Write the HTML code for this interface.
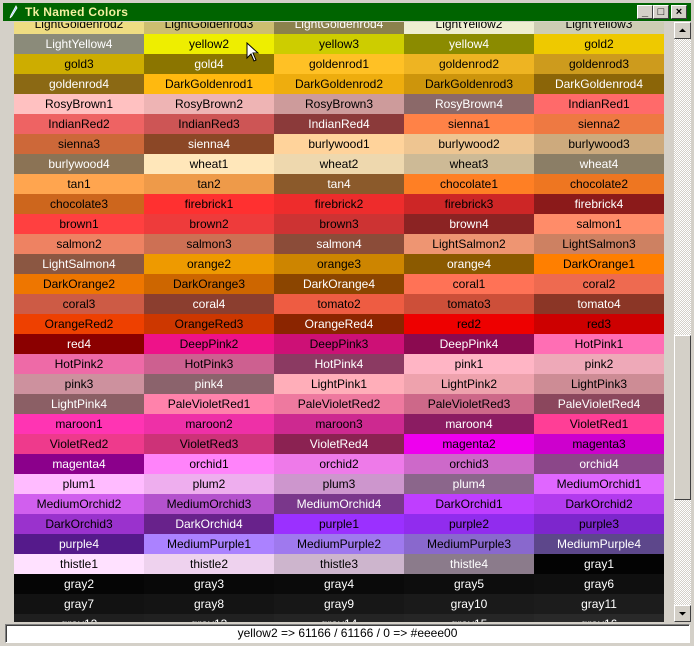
<!DOCTYPE html>
<html><head><meta charset="utf-8"><style>
*{margin:0;padding:0;box-sizing:border-box}
body{width:694px;height:646px;background:#d4d0c8;position:relative;overflow:hidden;font-family:"Liberation Sans",sans-serif}
#tb{position:absolute;left:3px;top:3px;width:688px;height:18px;background:#006400}
#tb .t{position:absolute;left:22px;top:2px;font-weight:bold;font-size:12px;color:#f4f0a0;letter-spacing:0.3px}
.btn{position:absolute;top:2px;width:16px;height:14px;background:#d4d0c8;border:1px solid;border-color:#fff #404040 #404040 #fff;font-size:11px;line-height:12px;text-align:center;color:#000;font-weight:bold}
#grid{position:absolute;left:14px;top:22px;width:650px;height:600px;overflow:hidden}
#in{position:absolute;left:0;top:-8px}
.r{display:flex;height:20px}
.r div{width:130px;height:20px;line-height:20px;text-align:center;font-size:12px;color:#000;white-space:nowrap}
.w{color:#fff!important}
#sb{position:absolute;left:674px;top:22px;width:17px;height:600px;background-color:#eee;background-image:repeating-conic-gradient(#d4d0c8 0 25%,#fff 0 50%);background-size:2px 2px}
.ab{position:absolute;left:0;width:17px;height:17px;background:#d4d0c8;border:1px solid;border-color:#fff #404040 #404040 #fff}
#thumb{position:absolute;left:0;top:313px;width:17px;height:165px;background:#d4d0c8;border:1px solid;border-color:#fff #404040 #404040 #fff}
#st{position:absolute;left:5px;top:624px;width:685px;height:19px;background:#fff;border:1px solid;border-color:#808080 #fff #fff #808080;box-shadow:inset 1px 1px 0 #404040;font-size:12px;line-height:17px;text-align:center;color:#000}
</style></head><body>
<div id="tb"><svg style="position:absolute;left:5px;top:2px" width="10" height="14"><path d="M8 1 L3 10 L2 13 L4 11 L9 3 Z" fill="#9cf" stroke="#fff" stroke-width="0.8"/></svg><span class="t">Tk Named Colors</span>
<div class="btn" style="left:634px">_</div><div class="btn" style="left:650px">□</div><div class="btn" style="left:668px">×</div></div>
<div id="grid"><div id="in">
<div class="r"><div style="background:rgb(238,220,130)">LightGoldenrod2</div><div style="background:rgb(205,190,112)">LightGoldenrod3</div><div class="w" style="background:rgb(139,129,76)">LightGoldenrod4</div><div style="background:rgb(238,238,209)">LightYellow2</div><div style="background:rgb(205,205,180)">LightYellow3</div></div>
<div class="r"><div class="w" style="background:rgb(139,139,122)">LightYellow4</div><div style="background:rgb(238,238,0)">yellow2</div><div style="background:rgb(205,205,0)">yellow3</div><div class="w" style="background:rgb(139,139,0)">yellow4</div><div style="background:rgb(238,201,0)">gold2</div></div>
<div class="r"><div style="background:rgb(205,173,0)">gold3</div><div class="w" style="background:rgb(139,117,0)">gold4</div><div style="background:rgb(255,193,37)">goldenrod1</div><div style="background:rgb(238,180,34)">goldenrod2</div><div style="background:rgb(205,155,29)">goldenrod3</div></div>
<div class="r"><div class="w" style="background:rgb(139,105,20)">goldenrod4</div><div style="background:rgb(255,185,15)">DarkGoldenrod1</div><div style="background:rgb(238,173,14)">DarkGoldenrod2</div><div style="background:rgb(205,149,12)">DarkGoldenrod3</div><div class="w" style="background:rgb(139,101,8)">DarkGoldenrod4</div></div>
<div class="r"><div style="background:rgb(255,193,193)">RosyBrown1</div><div style="background:rgb(238,180,180)">RosyBrown2</div><div style="background:rgb(205,155,155)">RosyBrown3</div><div class="w" style="background:rgb(139,105,105)">RosyBrown4</div><div style="background:rgb(255,106,106)">IndianRed1</div></div>
<div class="r"><div style="background:rgb(238,99,99)">IndianRed2</div><div style="background:rgb(205,85,85)">IndianRed3</div><div class="w" style="background:rgb(139,58,58)">IndianRed4</div><div style="background:rgb(255,130,71)">sienna1</div><div style="background:rgb(238,121,66)">sienna2</div></div>
<div class="r"><div style="background:rgb(205,104,57)">sienna3</div><div class="w" style="background:rgb(139,71,38)">sienna4</div><div style="background:rgb(255,211,155)">burlywood1</div><div style="background:rgb(238,197,145)">burlywood2</div><div style="background:rgb(205,170,125)">burlywood3</div></div>
<div class="r"><div class="w" style="background:rgb(139,115,85)">burlywood4</div><div style="background:rgb(255,231,186)">wheat1</div><div style="background:rgb(238,216,174)">wheat2</div><div style="background:rgb(205,186,150)">wheat3</div><div class="w" style="background:rgb(139,126,102)">wheat4</div></div>
<div class="r"><div style="background:rgb(255,165,79)">tan1</div><div style="background:rgb(238,154,73)">tan2</div><div class="w" style="background:rgb(139,90,43)">tan4</div><div style="background:rgb(255,127,36)">chocolate1</div><div style="background:rgb(238,118,33)">chocolate2</div></div>
<div class="r"><div style="background:rgb(205,102,29)">chocolate3</div><div style="background:rgb(255,48,48)">firebrick1</div><div style="background:rgb(238,44,44)">firebrick2</div><div style="background:rgb(205,38,38)">firebrick3</div><div class="w" style="background:rgb(139,26,26)">firebrick4</div></div>
<div class="r"><div style="background:rgb(255,64,64)">brown1</div><div style="background:rgb(238,59,59)">brown2</div><div style="background:rgb(205,51,51)">brown3</div><div class="w" style="background:rgb(139,35,35)">brown4</div><div style="background:rgb(255,140,105)">salmon1</div></div>
<div class="r"><div style="background:rgb(238,130,98)">salmon2</div><div style="background:rgb(205,112,84)">salmon3</div><div class="w" style="background:rgb(139,76,57)">salmon4</div><div style="background:rgb(238,149,114)">LightSalmon2</div><div style="background:rgb(205,129,98)">LightSalmon3</div></div>
<div class="r"><div class="w" style="background:rgb(139,87,66)">LightSalmon4</div><div style="background:rgb(238,154,0)">orange2</div><div style="background:rgb(205,133,0)">orange3</div><div class="w" style="background:rgb(139,90,0)">orange4</div><div style="background:rgb(255,127,0)">DarkOrange1</div></div>
<div class="r"><div style="background:rgb(238,118,0)">DarkOrange2</div><div style="background:rgb(205,102,0)">DarkOrange3</div><div class="w" style="background:rgb(139,69,0)">DarkOrange4</div><div style="background:rgb(255,114,86)">coral1</div><div style="background:rgb(238,106,80)">coral2</div></div>
<div class="r"><div style="background:rgb(205,91,69)">coral3</div><div class="w" style="background:rgb(139,62,47)">coral4</div><div style="background:rgb(238,92,66)">tomato2</div><div style="background:rgb(205,79,57)">tomato3</div><div class="w" style="background:rgb(139,54,38)">tomato4</div></div>
<div class="r"><div style="background:rgb(238,64,0)">OrangeRed2</div><div style="background:rgb(205,55,0)">OrangeRed3</div><div class="w" style="background:rgb(139,37,0)">OrangeRed4</div><div style="background:rgb(238,0,0)">red2</div><div style="background:rgb(205,0,0)">red3</div></div>
<div class="r"><div class="w" style="background:rgb(139,0,0)">red4</div><div style="background:rgb(238,18,137)">DeepPink2</div><div style="background:rgb(205,16,118)">DeepPink3</div><div class="w" style="background:rgb(139,10,80)">DeepPink4</div><div style="background:rgb(255,110,180)">HotPink1</div></div>
<div class="r"><div style="background:rgb(238,106,167)">HotPink2</div><div style="background:rgb(205,96,144)">HotPink3</div><div class="w" style="background:rgb(139,58,98)">HotPink4</div><div style="background:rgb(255,181,197)">pink1</div><div style="background:rgb(238,169,184)">pink2</div></div>
<div class="r"><div style="background:rgb(205,145,158)">pink3</div><div class="w" style="background:rgb(139,99,108)">pink4</div><div style="background:rgb(255,174,185)">LightPink1</div><div style="background:rgb(238,162,173)">LightPink2</div><div style="background:rgb(205,140,149)">LightPink3</div></div>
<div class="r"><div class="w" style="background:rgb(139,95,101)">LightPink4</div><div style="background:rgb(255,130,171)">PaleVioletRed1</div><div style="background:rgb(238,121,159)">PaleVioletRed2</div><div style="background:rgb(205,104,137)">PaleVioletRed3</div><div class="w" style="background:rgb(139,71,93)">PaleVioletRed4</div></div>
<div class="r"><div style="background:rgb(255,52,179)">maroon1</div><div style="background:rgb(238,48,167)">maroon2</div><div style="background:rgb(205,41,144)">maroon3</div><div class="w" style="background:rgb(139,28,98)">maroon4</div><div style="background:rgb(255,62,150)">VioletRed1</div></div>
<div class="r"><div style="background:rgb(238,58,140)">VioletRed2</div><div style="background:rgb(205,50,120)">VioletRed3</div><div class="w" style="background:rgb(139,34,82)">VioletRed4</div><div style="background:rgb(238,0,238)">magenta2</div><div style="background:rgb(205,0,205)">magenta3</div></div>
<div class="r"><div class="w" style="background:rgb(139,0,139)">magenta4</div><div style="background:rgb(255,131,250)">orchid1</div><div style="background:rgb(238,122,233)">orchid2</div><div style="background:rgb(205,105,201)">orchid3</div><div class="w" style="background:rgb(139,71,137)">orchid4</div></div>
<div class="r"><div style="background:rgb(255,187,255)">plum1</div><div style="background:rgb(238,174,238)">plum2</div><div style="background:rgb(205,150,205)">plum3</div><div class="w" style="background:rgb(139,102,139)">plum4</div><div style="background:rgb(224,102,255)">MediumOrchid1</div></div>
<div class="r"><div style="background:rgb(209,95,238)">MediumOrchid2</div><div style="background:rgb(180,82,205)">MediumOrchid3</div><div class="w" style="background:rgb(122,55,139)">MediumOrchid4</div><div style="background:rgb(191,62,255)">DarkOrchid1</div><div style="background:rgb(178,58,238)">DarkOrchid2</div></div>
<div class="r"><div style="background:rgb(154,50,205)">DarkOrchid3</div><div class="w" style="background:rgb(104,34,139)">DarkOrchid4</div><div style="background:rgb(155,48,255)">purple1</div><div style="background:rgb(145,44,238)">purple2</div><div style="background:rgb(125,38,205)">purple3</div></div>
<div class="r"><div class="w" style="background:rgb(85,26,139)">purple4</div><div style="background:rgb(171,130,255)">MediumPurple1</div><div style="background:rgb(159,121,238)">MediumPurple2</div><div style="background:rgb(137,104,205)">MediumPurple3</div><div class="w" style="background:rgb(93,71,139)">MediumPurple4</div></div>
<div class="r"><div style="background:rgb(255,225,255)">thistle1</div><div style="background:rgb(238,210,238)">thistle2</div><div style="background:rgb(205,181,205)">thistle3</div><div class="w" style="background:rgb(139,123,139)">thistle4</div><div class="w" style="background:rgb(3,3,3)">gray1</div></div>
<div class="r"><div class="w" style="background:rgb(5,5,5)">gray2</div><div class="w" style="background:rgb(8,8,8)">gray3</div><div class="w" style="background:rgb(10,10,10)">gray4</div><div class="w" style="background:rgb(13,13,13)">gray5</div><div class="w" style="background:rgb(15,15,15)">gray6</div></div>
<div class="r"><div class="w" style="background:rgb(18,18,18)">gray7</div><div class="w" style="background:rgb(20,20,20)">gray8</div><div class="w" style="background:rgb(23,23,23)">gray9</div><div class="w" style="background:rgb(26,26,26)">gray10</div><div class="w" style="background:rgb(28,28,28)">gray11</div></div>
<div class="r"><div class="w" style="background:rgb(31,31,31)">gray12</div><div class="w" style="background:rgb(33,33,33)">gray13</div><div class="w" style="background:rgb(36,36,36)">gray14</div><div class="w" style="background:rgb(38,38,38)">gray15</div><div class="w" style="background:rgb(41,41,41)">gray16</div></div>
</div></div>
<svg style="position:absolute;left:246px;top:42px" width="14" height="22"><path d="M1 1 L1 16 L5 12 L8 19 L10 18 L7 11 L12 11 Z" fill="#fff" stroke="#000" stroke-width="1"/></svg>
<div id="sb">
<div class="ab" style="top:0"><svg width="15" height="15"><path d="M4 9 L11 9 L7.5 5.5 Z" fill="#000"/></svg></div>
<div id="thumb"></div>
<div class="ab" style="top:583px"><svg width="15" height="15"><path d="M4 6 L11 6 L7.5 9.5 Z" fill="#000"/></svg></div>
</div>
<div id="st">yellow2 =&gt; 61166 / 61166 / 0 =&gt; #eeee00</div>
</body></html>
